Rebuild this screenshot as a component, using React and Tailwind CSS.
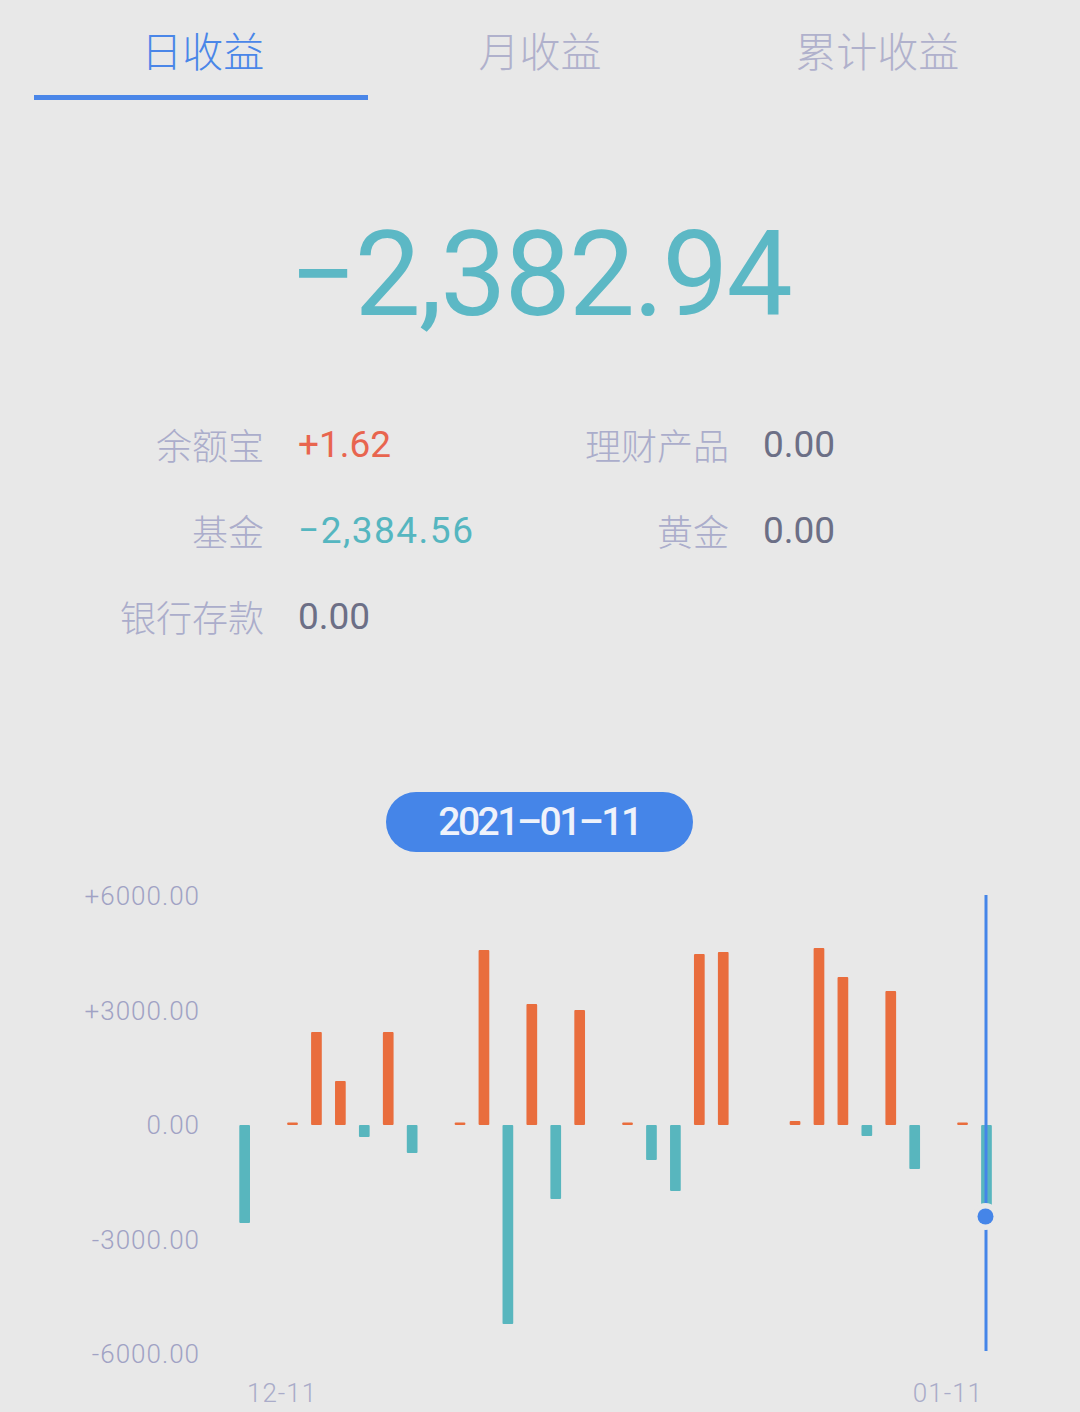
import React from "react";

const CJK = "font-['Noto_Sans_CJK_SC',sans-serif]";
const NUM = "font-['Roboto',sans-serif]";

const OFFX = 200;
const OFFY = 874;
const ZERO = 1126 - OFFY; // svg y of zero line

// value in px: + is up (orange), - is down (teal), null = no bar
const bars = [
  -98, null, 2.5, 93, 44, -12, 93, -28, null, 2.5, 175, -199, 121, -74, 115,
  null, 2.5, -35, -66, 171, 173, null, null, 4, 177, 148, -11, 134, -44, null,
  2.5, -92,
];

function Chart() {
  return (
    <svg width="880" height="505" className="block overflow-visible">
      {bars.map((v, i) => {
        if (v === null) return null;
        const x = 239.3 + 23.93 * i - OFFX;
        const w = 10.7;
        if (v > 0) {
          return (
            <rect
              key={i}
              x={x}
              y={ZERO - v}
              width={w}
              height={v}
              rx="1"
              fill="#e96d3d"
            />
          );
        }
        return (
          <rect
            key={i}
            x={x}
            y={ZERO}
            width={w}
            height={-v}
            rx="1"
            fill="#58b6be"
          />
        );
      })}
      <rect
        x={984.5 - OFFX}
        y={896 - OFFY}
        width="3"
        height={1352 - 896}
        fill="#4585e8"
      />
      <circle cx={985.5 - OFFX} cy={1217.5 - OFFY} r="13.5" fill="#e8e8e8" />
      <circle cx={985.5 - OFFX} cy={1217.5 - OFFY} r="8" fill="#4585e8" />
    </svg>
  );
}

function Stat({ label, value, color, extra = "" }) {
  return (
    <>
      <div className={`${CJK} font-light text-[36px] leading-none text-right text-[#abadcb]`}>
        {label}
      </div>
      <div className={`${NUM} text-[37px] leading-none ${color} ${extra}`}>{value}</div>
    </>
  );
}

export default function App() {
  return (
    <div className="w-[1080px] h-[1412px] bg-[#e8e8e8] overflow-hidden">
      {/* Tabs */}
      <div className="grid grid-cols-3 px-[34px]">
        <div className="flex flex-col">
          <div className={`h-[95px] flex items-center justify-center pt-[4px] ${CJK} font-light text-[41px] leading-none text-[#4a86e8]`}>
            日收益
          </div>
          <div className="h-[5px] w-[334px] bg-[#4a86e8]" />
        </div>
        <div className="flex flex-col">
          <div className={`h-[95px] flex items-center justify-center pt-[4px] ${CJK} font-light text-[41px] leading-none text-[#b0b1cc]`}>
            月收益
          </div>
        </div>
        <div className="flex flex-col">
          <div className={`h-[95px] flex items-center justify-center pt-[4px] ${CJK} font-light text-[41px] leading-none text-[#b0b1cc]`}>
            累计收益
          </div>
        </div>
      </div>

      {/* Big number */}
      <div className={`mt-[116px] h-[118px] text-center ${NUM} text-[118px] leading-none tracking-[-2px] text-[#5cb8c5]`}>
        −2,382.94
      </div>

      {/* Stats */}
      <div className="mt-[67px] grid grid-cols-[264px_200px_197px_1fr] gap-x-[34px] auto-rows-[86px] items-center">
        <Stat label="余额宝" value="+1.62" color="text-[#e8654f]" />
        <Stat label="理财产品" value="0.00" color="text-[#6c6f86]" />
        <Stat label="基金" value="−2,384.56" color="text-[#55b6c0]" extra="tracking-[1.5px]" />
        <Stat label="黄金" value="0.00" color="text-[#6c6f86]" />
        <Stat label="银行存款" value="0.00" color="text-[#6c6f86]" />
      </div>

      {/* Date pill */}
      <div className="mt-[133px] flex justify-center">
        <div className="w-[307px] h-[60px] ml-[-1px] rounded-full bg-[#4585e8] flex items-center justify-center">
          <span className={`${NUM} font-medium text-[39px] leading-none tracking-[-2.5px] text-[#eef2fb]`}>
            2021–01–11
          </span>
        </div>
      </div>

      {/* Chart */}
      <div className="mt-[21px] flex">
        <div className={`w-[200px] h-[504px] flex flex-col justify-between items-end ${NUM} font-light text-[26px] leading-[46px] tracking-[1px] text-[#a0a2c4]`}>
          <div>+6000.00</div>
          <div>+3000.00</div>
          <div>0.00</div>
          <div>-3000.00</div>
          <div>-6000.00</div>
        </div>
        <Chart />
      </div>
      <div className={`mt-[3px] flex justify-between pl-[247px] pr-[97px] ${NUM} font-light text-[26px] leading-[24px] tracking-[1px] text-[#aaacc9]`}>
        <div>12-11</div>
        <div>01-11</div>
      </div>
    </div>
  );
}
